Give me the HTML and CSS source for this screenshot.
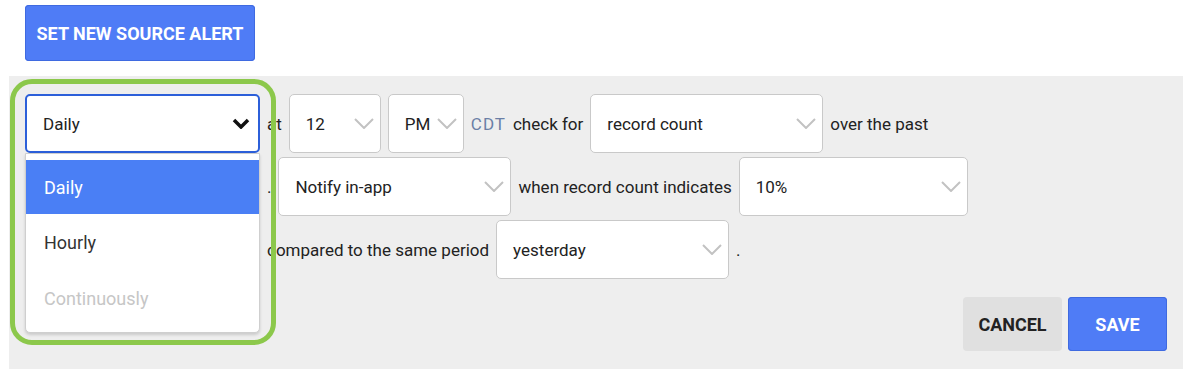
FILE: index.html
```html
<!doctype html>
<html lang="en">
    <head>
        <meta charset="UTF-8" />
        <meta name="viewport" content="width=device-width, initial-scale=1.0" />
        <title>Source Alerts</title>
        <link rel="stylesheet" href="styles.css">
    </head>
    <body>
        <button class="btn btn-primary btn-new">Set new source alert</button>

        <div class="panel">
            <div class="rule">
                <!-- Schedule -->
                <div class="row">
                    <div class="freq">
                        <div class="select select-open">
                            <span>Daily</span>
                            <svg class="chevron chevron-dark" width="18" height="11" viewBox="0 0 18 11"><polyline points="2,2 9,9 16,2" /></svg>
                        </div>
                        <ul class="menu">
                            <li class="active">Daily</li>
                            <li>Hourly</li>
                            <li class="disabled">Continuously</li>
                        </ul>
                        <div class="callout"></div>
                    </div>
                    <span class="label">at</span>
                    <div class="select select-hour">
                        <span>12</span>
                        <svg class="chevron" width="20" height="11" viewBox="0 0 20 11"><polyline points="1,1 10,10 19,1" /></svg>
                    </div>
                    <div class="select select-ampm">
                        <span>PM</span>
                        <svg class="chevron" width="20" height="11" viewBox="0 0 20 11"><polyline points="1,1 10,10 19,1" /></svg>
                    </div>
                    <span class="label tz">CDT</span>
                    <span class="label">check for</span>
                    <div class="select">
                        <span>record count</span>
                        <svg class="chevron" width="20" height="11" viewBox="0 0 20 11"><polyline points="1,1 10,10 19,1" /></svg>
                    </div>
                    <span class="label">over the past</span>
                </div>

                <!-- Action (period picker sits under the open menu) -->
                <div class="row">
                    <div class="select select-wide">
                        <span></span>
                        <svg class="chevron" width="20" height="11" viewBox="0 0 20 11"><polyline points="1,1 10,10 19,1" /></svg>
                    </div>
                    <span class="label">.</span>
                    <div class="select">
                        <span>Notify in-app</span>
                        <svg class="chevron" width="20" height="11" viewBox="0 0 20 11"><polyline points="1,1 10,10 19,1" /></svg>
                    </div>
                    <span class="label">when record count indicates</span>
                    <div class="select select-pct">
                        <span>10%</span>
                        <svg class="chevron" width="20" height="11" viewBox="0 0 20 11"><polyline points="1,1 10,10 19,1" /></svg>
                    </div>
                </div>

                <!-- Comparison -->
                <div class="row">
                    <div class="select select-wide">
                        <span></span>
                        <svg class="chevron" width="20" height="11" viewBox="0 0 20 11"><polyline points="1,1 10,10 19,1" /></svg>
                    </div>
                    <span class="label">compared to the same period</span>
                    <div class="select">
                        <span>yesterday</span>
                        <svg class="chevron" width="20" height="11" viewBox="0 0 20 11"><polyline points="1,1 10,10 19,1" /></svg>
                    </div>
                    <span class="label">.</span>
                </div>
            </div>

            <div class="actions">
                <button class="btn btn-light">Cancel</button>
                <button class="btn btn-primary">Save</button>
            </div>
        </div>
    </body>
</html>
```

FILE: styles.css
```css
body {
    font-family: Roboto, "Noto Sans", sans-serif;
    margin: 5px 10px 0 9px;
    background: #fff;
    color: #222;
}

.btn {
    font-family: Roboto, sans-serif;
    font-weight: 700;
    font-size: 18px;
    text-transform: uppercase;
    border: none;
    border-radius: 4px;
    cursor: pointer;
}

.btn-primary {
    background: #4f7cf6;
    color: #fff;
    box-shadow: 0 0 0 1px #3f6ae0 inset;
}

.btn-light {
    background: #e0e0e0;
    color: #222;
}

.btn-new {
    margin-left: 16px;
    width: 230px;
    height: 56px;
}

.panel {
    margin-top: 15px;
    padding: 18px 16px 18px 16px;
    background: #eeeeee;
}

.rule {
    display: flex;
    flex-direction: column;
    gap: 4px;
}

.row {
    display: flex;
    align-items: center;
    gap: 7px;
    font-size: 17px;
}

.label {
    white-space: nowrap;
}

.tz {
    color: #6b7fa6;
    letter-spacing: 1px;
}

.select {
    box-sizing: border-box;
    width: 233px;
    height: 59px;
    display: flex;
    align-items: center;
    justify-content: space-between;
    padding: 0 6px 0 16px;
    background: #fff;
    border: 1px solid #c9c9c9;
    border-radius: 5px;
    color: #222;
    font-size: 17px;
}

.select-wide {
    width: 235px;
}

.select-hour {
    width: 92px;
}

.select-ampm {
    width: 76px;
}

.select-pct {
    width: 229px;
}

.chevron {
    fill: none;
    stroke: #c2c2c2;
    stroke-width: 2;
}

.chevron-dark {
    stroke: #111;
    stroke-width: 3.5;
}

.freq {
    position: relative;
}

.select-open {
    width: 235px;
    border: 2px solid #2c5fd9;
    padding: 0 8px 0 16px;
}

.menu {
    position: absolute;
    top: 100%;
    left: 0;
    z-index: 2;
    box-sizing: border-box;
    width: 100%;
    height: 180px;
    margin: 0;
    padding: 6px 0 0;
    list-style: none;
    background: #fff;
    border: 1px solid #cfcfcf;
    border-radius: 0 0 5px 5px;
    box-shadow: 0 2px 3px rgba(0, 0, 0, 0.15);
    font-size: 18px;
}

.menu li {
    height: 56px;
    display: flex;
    align-items: center;
    padding-left: 18px;
    color: #333;
}

.menu li.active {
    height: 54px;
    background: #4a7ff5;
    color: #fff;
}

.menu li.disabled {
    color: #c6c6c6;
}

/* highlight ring drawn over the frequency picker */
.callout {
    position: absolute;
    top: -15px;
    left: -15px;
    z-index: 3;
    width: 266px;
    height: 266px;
    box-sizing: border-box;
    border: 5px solid #8cc84b;
    border-radius: 22px;
    pointer-events: none;
}

.actions {
    display: flex;
    justify-content: flex-end;
    gap: 6px;
    margin-top: 18px;
}

.actions .btn {
    width: 99px;
    height: 54px;
}
```
